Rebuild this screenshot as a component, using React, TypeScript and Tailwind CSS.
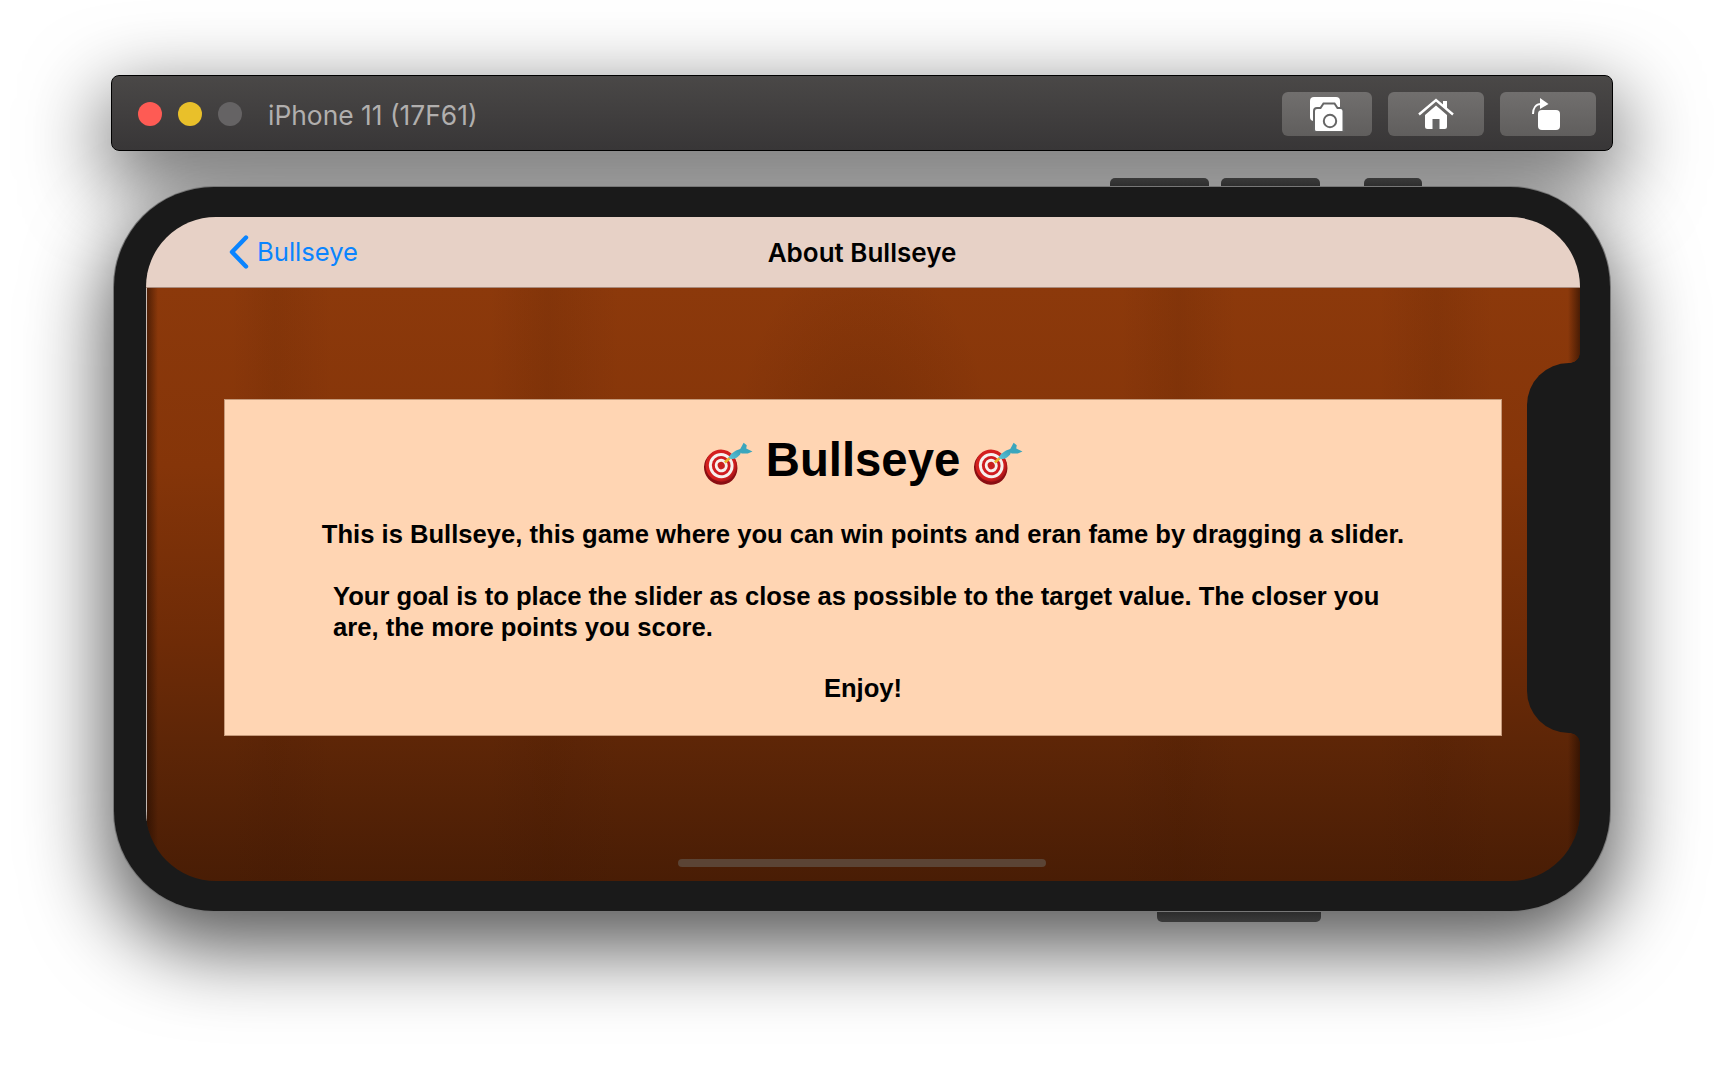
import React from 'react';

function Dartboard() {
  return (
    <svg width="50" height="43" viewBox="0 0 48 41" className="mt-[6px] shrink-0">
      <defs>
        <radialGradient id="dartRim" cx="0.45" cy="0.4" r="0.7">
          <stop offset="0.7" stopColor="#d4201f" />
          <stop offset="1" stopColor="#7d0b10" />
        </radialGradient>
        <linearGradient id="dartBlue" x1="0" y1="1" x2="1" y2="0">
          <stop offset="0" stopColor="#5cc6da" />
          <stop offset="1" stopColor="#2f97b0" />
        </linearGradient>
      </defs>
      <ellipse cx="17" cy="24.500" rx="16" ry="16.500" fill="#8a0e13" transform="rotate(-20 17 24.500)" />
      <ellipse cx="17.500" cy="22.500" rx="15" ry="15.500" fill="url(#dartRim)" transform="rotate(-20 17.500 22.500)" />
      <ellipse cx="17.500" cy="22.500" rx="11.800" ry="12.200" fill="#f7f1ee" transform="rotate(-20 17.500 22.500)" />
      <ellipse cx="17.500" cy="22.500" rx="9" ry="9.300" fill="#cf1d20" transform="rotate(-20 17.500 22.500)" />
      <ellipse cx="17.500" cy="22.500" rx="6.200" ry="6.500" fill="#f7f1ee" transform="rotate(-20 17.500 22.500)" />
      <ellipse cx="17.500" cy="22.500" rx="3.400" ry="3.600" fill="#c8201f" transform="rotate(-20 17.500 22.500)" />
      <path d="M21 19.500 L26 15" stroke="#e9b52c" strokeWidth="2.600" />
      <path d="M24.500 15 C27 10 32 7 38 6 L35.500 12 C32 16 28 17.500 24.500 15Z" fill="url(#dartBlue)" />
      <path d="M35 8 L39 0.500 L42 3 L41.500 6 L47.500 9 L43 11 L37 11Z" fill="#3ba6bd" />
    </svg>
  );
}

function CameraIcon() {
  return (
    <svg width="36" height="36" viewBox="0 0 36 36" fill="none">
      <rect x="1" y="1" width="30" height="24" rx="4" fill="#fff" />
      <path d="M5 15a3 3 0 0 1 3-3h3.500l3-4.500h11l3 4.500h3a3 3 0 0 1 3 3v21H7.500A2.500 2.500 0 0 1 5 33.500Z" fill="#fff" stroke="#666" strokeWidth="2" />
      <circle cx="21" cy="25" r="6.200" fill="#fff" stroke="#666" strokeWidth="2" />
    </svg>
  );
}

function HomeIcon() {
  return (
    <svg width="36" height="32" viewBox="0 0 36 32" fill="none">
      <path d="M1 16.500 18 2l17 14.500" stroke="#fff" strokeWidth="2.400" />
      <path d="M25 3h4v8l-4-3.500Z" fill="#fff" />
      <path d="M7 17 18 7.500 29 17v11.500a2.500 2.500 0 0 1-2.500 2.500h-17A2.500 2.500 0 0 1 7 28.500Z" fill="#fff" />
      <rect x="14.500" y="21" width="7" height="10" fill="#666" />
    </svg>
  );
}

function RotateIcon() {
  return (
    <svg width="32" height="36" viewBox="0 0 32 36" fill="none">
      <rect x="6" y="14" width="22" height="20" rx="4" fill="#fff" />
      <path d="M1 18c0-6 3-10 8-10" stroke="#fff" strokeWidth="2" />
      <path d="M8 2l8.500 6L8 13Z" fill="#fff" />
    </svg>
  );
}

function ToolButton({ width, children }: { width: string; children: React.ReactNode }) {
  return (
    <div className={`${width} flex h-11 items-center justify-center rounded-md bg-gradient-to-b from-[#716f6e] to-[#605e5d]`}>
      {children}
    </div>
  );
}

export default function App() {
  return (
    <div className="flex h-[1076px] w-[1724px] flex-col items-center overflow-hidden bg-white pt-[75px]">
      {/* Simulator title bar */}
      <div className="relative z-10 flex h-[76px] w-[1502px] items-center justify-between rounded-lg border border-black bg-gradient-to-b from-[#4a4847] to-[#383637] pl-[26px] pr-[16px] pt-[2px] shadow-[0_26px_80px_6px_rgba(0,0,0,0.6)]">
        <div className="flex items-center">
          <div className="h-6 w-6 rounded-full bg-[#fe5b54]" />
          <div className="ml-4 h-6 w-6 rounded-full bg-[#e9c02a]" />
          <div className="ml-4 h-6 w-6 rounded-full bg-[#656364]" />
          <span className="ml-[26px] mt-[3px] font-['Inter',sans-serif] text-[26.400px] text-[#b1afae]">iPhone 11 (17F61)</span>
        </div>
        <div className="flex items-center gap-4">
          <ToolButton width="w-[90px]"><CameraIcon /></ToolButton>
          <ToolButton width="w-24"><HomeIcon /></ToolButton>
          <ToolButton width="w-24"><RotateIcon /></ToolButton>
        </div>
      </div>

      {/* Phone */}
      <div className="relative mt-[36px] w-[1496px] shrink-0">
        {/* Shadow sits under the title bar, the phone body sits over the title bar's shadow */}
        <div className="absolute inset-0 rounded-[100px] shadow-[0_30px_80px_8px_rgba(0,0,0,0.65)]" />

        {/* Side buttons */}
        <div className="absolute left-[996px] top-[-9px] z-20 h-[10px] w-[99px] rounded-t-[5px] bg-gradient-to-b from-[#3a3a3a] to-[#2b2b2b]" />
        <div className="absolute left-[1107px] top-[-9px] z-20 h-[10px] w-[99px] rounded-t-[5px] bg-gradient-to-b from-[#3a3a3a] to-[#2b2b2b]" />
        <div className="absolute left-[1250px] top-[-9px] z-20 h-[10px] w-[58px] rounded-t-[5px] bg-gradient-to-b from-[#3a3a3a] to-[#2b2b2b]" />
        <div className="absolute bottom-[-11px] left-[1043px] z-20 h-[11px] w-[164px] rounded-b-[5px] bg-gradient-to-b from-[#2b2b2b] to-[#3a3a3a]" />

        <div className="relative z-20 h-[724px] rounded-[100px] bg-[#1a1a1a] pb-[30px] pl-[32px] pr-[30px] pt-[30px] shadow-[0_0_0_1px_#777]">
          <div className="relative flex h-full flex-col overflow-hidden rounded-[70px]">
            {/* Nav bar */}
            <div className="relative flex h-[71px] shrink-0 items-center justify-center border-b border-[#a98a7c] bg-[#e7d1c6]">
              <div className="absolute left-[83px] top-4 flex items-center gap-2">
                <svg width="20" height="34" viewBox="0 0 20 34" fill="none">
                  <path d="M17 2.500 3 17l14 14.500" stroke="#0a84ff" strokeWidth="4.400" strokeLinecap="round" strokeLinejoin="round" />
                </svg>
                <span className="font-['Inter',sans-serif] text-[25.600px] text-[#0a84ff]">Bullseye</span>
              </div>
              <span className="pr-[2px] font-['Inter',sans-serif] text-[26px] font-semibold text-black">About Bullseye</span>
            </div>

            {/* Wood background */}
            <div className="relative flex flex-1 flex-col bg-[linear-gradient(to_right,rgba(30,10,0,0.6),transparent_12px,transparent_calc(100%-12px),rgba(30,10,0,0.6)),linear-gradient(to_right,transparent_6%,rgba(60,20,0,0.09)_9%,transparent_13%,transparent_24%,rgba(60,20,0,0.11)_28%,transparent_33%,transparent_68%,rgba(60,20,0,0.11)_72%,transparent_76%,transparent_86%,rgba(60,20,0,0.1)_90%,transparent_94%),radial-gradient(ellipse_130px_210px_at_50%_170px,rgba(60,20,0,0.2),transparent),linear-gradient(to_bottom,#8c390b_0%,#853509_30%,#6e2b07_60%,#5e2607_76%,#491d05_100%)] pl-[78px] pt-[111px]">
              <div className="absolute bottom-[60px] left-0 top-0 w-px bg-white/70" />
              <div className="flex h-[337px] w-[1278px] flex-col items-center border border-[#c69a7a] bg-[#ffd5b3] font-['Liberation_Sans',sans-serif] font-bold text-black">
                <div className="mt-[33px] flex items-center gap-[13px]">
                  <Dartboard />
                  <span className="text-[47.300px] leading-[54px]">Bullseye</span>
                  <Dartboard />
                </div>
                <p className="mt-[32px] text-[25.600px] leading-[31px]">
                  This is Bullseye, this game where you can win points and eran fame by dragging a slider.
                </p>
                <p className="mt-[31px] w-[1060px] text-[25.600px] leading-[31px]">
                  Your goal is to place the slider as close as possible to the target value. The closer you are, the more points you score.
                </p>
                <p className="mt-[30px] text-[25.600px] leading-[31px]">Enjoy!</p>
              </div>
              {/* Home indicator */}
              <div className="absolute bottom-[14px] left-[calc(50%-1px)] h-2 w-[368px] -translate-x-1/2 rounded-full bg-[#5b4435]" />
            </div>
          </div>
          {/* Sensor housing */}
          <div className="absolute right-[30px] top-[176px] h-[370px] w-[53px] rounded-l-[42px] bg-[#1a1a1a]" />
          <div className="absolute right-[30px] top-[166px] h-2.5 w-2.5 bg-[radial-gradient(circle_at_0_0,transparent_9.500px,#1a1a1a_10px)]" />
          <div className="absolute right-[30px] top-[546px] h-2.5 w-2.5 bg-[radial-gradient(circle_at_0_100%,transparent_9.500px,#1a1a1a_10px)]" />
        </div>
      </div>
    </div>
  );
}
